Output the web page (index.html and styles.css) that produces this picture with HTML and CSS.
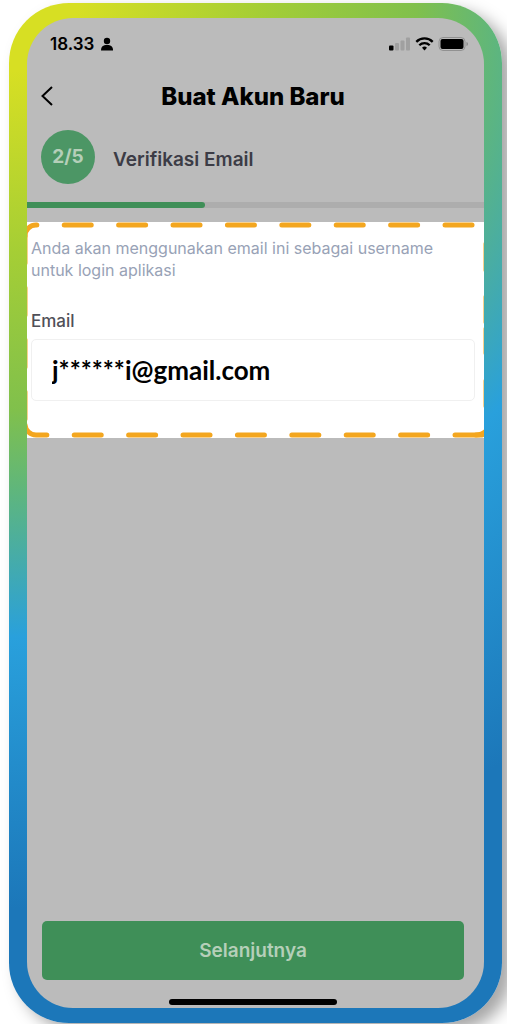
FILE: index.html
```
<!DOCTYPE html>
<html lang="id">
<head>
  <meta charset="UTF-8">
  <meta name="viewport" content="width=device-width, initial-scale=1.0">
  <title>Buat Akun Baru</title>
  <link rel="stylesheet" href="styles.css">
</head>
<body>

  <div class="phone">
    <main class="screen">

      <div class="status-bar">
        <span class="clock">18.33</span>
        <svg class="person" width="12" height="14" viewBox="0 0 12 14">
          <circle cx="6" cy="4" r="3.200"/>
          <path d="M0 13.500c0-4 2-5.500 6-5.500s6 1.500 6 5.500z"/>
        </svg>
        <svg class="signal" width="80" height="16" viewBox="0 0 80 16">
          <rect x="0" y="9.500" width="4.500" height="5" rx="1"/>
          <g fill="#a0a0a0">
            <rect x="6" y="7" width="4" height="7.500" rx="1"/>
            <rect x="11.500" y="4.500" width="4" height="10" rx="1"/>
            <rect x="17" y="1.500" width="4" height="13" rx="1"/>
          </g>
          <g fill="none" stroke="#000" stroke-width="2.300">
            <path d="M27.300 5.900a11.500 11.500 0 0 1 16.400 0"/>
            <path d="M30.300 9.300a7.400 7.400 0 0 1 10.400 0"/>
          </g>
          <path d="M35.500 14.500l-2.500-2.700a3.600 3.600 0 0 1 5 0z"/>
          <rect x="50" y="1.500" width="26" height="13" rx="4" fill="#bbb" stroke="#919191"/>
          <rect x="51.500" y="3" width="23" height="10" rx="2"/>
          <path d="M77.500 6v4q1.500-.6 1.500-2t-1.500-2z" fill="#888"/>
        </svg>
      </div>

      <header class="title-bar">
        <button type="button" class="back" aria-label="Kembali">
          <svg width="12" height="20" viewBox="0 0 12 20">
            <path d="M11 1L1.500 10l9.500 9" fill="none" stroke="#000" stroke-width="2"/>
          </svg>
        </button>
        <h1>Buat Akun Baru</h1>
      </header>

      <div class="step">
        <span class="step-count">2/5</span>
        <h2>Verifikasi Email</h2>
      </div>
      <progress class="step-progress" value="39" max="100" aria-label="Langkah 2 dari 5"></progress>

      <form id="emailForm" class="email-form">
        <!-- dashed highlight around the form -->
        <svg class="dashes">
          <path d="M-2 14a11 11 0 0 1 11-11H2000" stroke-dasharray="27 27.400" stroke-dashoffset="9"/>
          <path d="M-2 202a11 11 0 0 0 11 11H2000" stroke-dasharray="27 27.400" stroke-dashoffset="-1"/>
          <path d="M-2 14V202" stroke-dasharray="27 25"/>
          <svg x="100%" overflow="visible">
            <path d="M2 22V48M2 75V100M2 107V131M2 159V184"/>
            <path d="M-8 213q6 0 10-4" />
          </svg>
        </svg>
        <p>Anda akan menggunakan email ini sebagai username untuk login aplikasi</p>
        <label for="email">Email</label>
        <input type="text" id="email" value="j******i@gmail.com">
      </form>

      <footer class="bottom">
        <button type="submit" form="emailForm" class="next">Selanjutnya</button>
        <div class="home-bar"></div>
      </footer>

    </main>
  </div>

</body>
</html>
```
FILE: styles.css
```
* {
  box-sizing: border-box;
}

body {
  margin: 0;
  padding: 3px 5px 1px 9px;
  background-color: #fff;
  font-family: Inter, "Liberation Sans", sans-serif;
  overflow-x: hidden;
}

.phone {
  display: flex;
  min-height: calc(100vh - 4px);
  padding: 15px 18px;
  border-radius: 60px;
  background: radial-gradient(circle at 0 0, #d7df23 6%, #a5ce35 22%, #80c04c 36%, #5fb67c 43%, #29a0dc 56%, #1c77b9 80%);
  box-shadow: 10px 8px 16px rgba(0, 0, 0, 0.35);
}

.screen {
  flex: 1;
  display: flex;
  flex-direction: column;
  border-radius: 46px;
  background-color: #bbb;
  overflow: hidden;
}

.status-bar {
  display: flex;
  align-items: center;
  height: 52px;
  padding: 0 15px 0 23px;
}

.clock {
  font-size: 17px;
  font-weight: 600;
  margin-right: 7px;
}

.signal {
  margin-left: auto;
}

.title-bar {
  display: grid;
  grid-template-columns: 40px 1fr 45px;
  align-items: center;
  height: 52px;
}

.back {
  display: flex;
  padding: 0 0 0 14px;
  border: 0;
  background: none;
  cursor: pointer;
}

h1 {
  margin: 0;
  font-size: 24px;
  font-weight: 800;
  text-align: center;
}

.step {
  display: flex;
  align-items: center;
  gap: 18px;
  height: 80px;
  padding: 0 14px 10px;
}

.step-count {
  width: 54px;
  height: 54px;
  border-radius: 50%;
  background-color: #4c9665;
  color: #b5cfb9;
  font-size: 19px;
  font-weight: 700;
  line-height: 54px;
  text-align: center;
}

h2 {
  margin: 4px 0 0;
  color: #3c3c46;
  font-size: 19px;
  font-weight: 600;
}

.step-progress {
  display: block;
  appearance: none;
  width: 100%;
  height: 6px;
  border: 0;
  background-color: #adadad;
}

.step-progress::-webkit-progress-bar {
  background-color: #adadad;
}

.step-progress::-webkit-progress-value {
  background-color: #3f8f58;
  border-radius: 0 3px 3px 0;
}

.email-form {
  position: relative;
  display: flex;
  flex-direction: column;
  margin-top: 14px;
  padding: 15px 9px 37px 4px;
  background-color: #fff;
}

.dashes {
  position: absolute;
  top: 0;
  left: 0;
  width: 100%;
  height: 100%;
  fill: none;
  stroke: #f3a61f;
  stroke-width: 5px;
  stroke-linecap: round;
  pointer-events: none;
}

p {
  max-width: 420px;
  margin: 0;
  color: #98a2b6;
  font-size: 16px;
  line-height: 22px;
}

label {
  margin-top: 29px;
  color: #505058;
  font-size: 17px;
  font-weight: 500;
  line-height: 22px;
}

input {
  width: 100%;
  height: 62px;
  margin-top: 7px;
  padding: 0 20px;
  border: 1px solid #f0f0f0;
  border-radius: 5px;
  background-color: #fff;
  color: #000;
  font-family: Lato, sans-serif;
  font-size: 26px;
  font-weight: 700;
}

.bottom {
  margin-top: auto;
  padding: 0 20px 3px 15px;
}

.next {
  display: block;
  width: 100%;
  height: 59px;
  border: 0;
  border-radius: 5px;
  background-color: #3f8f58;
  color: #b5cfb9;
  font-family: inherit;
  font-size: 19px;
  font-weight: 600;
  cursor: pointer;
}

.home-bar {
  width: 40%;
  height: 6px;
  margin: 19px auto 0;
  border-radius: 3px;
  background-color: #000;
}
```
